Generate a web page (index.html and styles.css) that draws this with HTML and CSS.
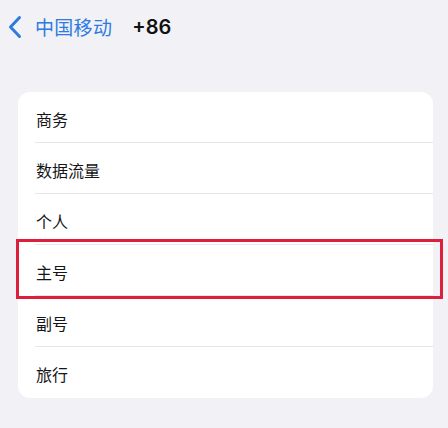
FILE: index.html
```html
<!DOCTYPE html>
<html lang="zh-CN">
<head>
<meta charset="utf-8">
<link rel="stylesheet" href="styles.css">
</head>
<body>
<header class="nav">
  <svg class="chevron" width="16" height="24" viewBox="0 0 16 24"><path d="M12.5 2.5 L3.5 12 L12.5 21.5" fill="none" stroke="#2d7be0" stroke-width="3" stroke-linecap="round" stroke-linejoin="round"/></svg>
  <span class="back">中国移动</span>
  <span class="code">+86</span>
</header>
<ul class="card">
  <li class="row">商务</li>
  <li class="row">数据流量</li>
  <li class="row">个人</li>
  <li class="row selected">主号<span class="highlight"></span></li>
  <li class="row">副号</li>
  <li class="row last">旅行</li>
</ul>
</body>
</html>
```

FILE: styles.css
```css
html, body {
  margin: 0;
  padding: 0;
  background: #f1f1f6;
  width: 448px;
  height: 428px;
  overflow: hidden;
  font-family: "Noto Sans CJK SC", "Noto Sans", sans-serif;
}
.nav {
  display: flex;
  align-items: center;
  height: 52px;
  padding-left: 7px;
}
.chevron {
  display: block;
  margin-top: 2px;
}
.back {
  color: #2d7be0;
  font-size: 19px;
  margin-left: 12px;
  letter-spacing: 0.3px;
}
.code {
  color: #111;
  font-family: "Inter", "Liberation Sans", sans-serif;
  font-weight: 600;
  font-size: 20px;
  margin-left: 20px;
  margin-top: 2px;
}
.card {
  list-style: none;
  margin: 40px 15px 0 18px;
  padding: 0;
  background: #fff;
  border-radius: 12px;
}
.row {
  position: relative;
  height: 51px;
  display: flex;
  align-items: center;
  padding-left: 18px;
  padding-top: 2px;
  font-size: 16px;
  font-weight: 400;
  color: #151517;
  box-sizing: border-box;
}
.row::after {
  content: "";
  position: absolute;
  left: 17px;
  right: 0;
  bottom: 0;
  height: 1px;
  background: #e6e6ea;
}
.row.last::after {
  display: none;
}
.highlight {
  position: absolute;
  left: -2px;
  right: -10px;
  top: -6px;
  bottom: -3px;
  border: 3px solid #dd1f3c;
  pointer-events: none;
}
```
